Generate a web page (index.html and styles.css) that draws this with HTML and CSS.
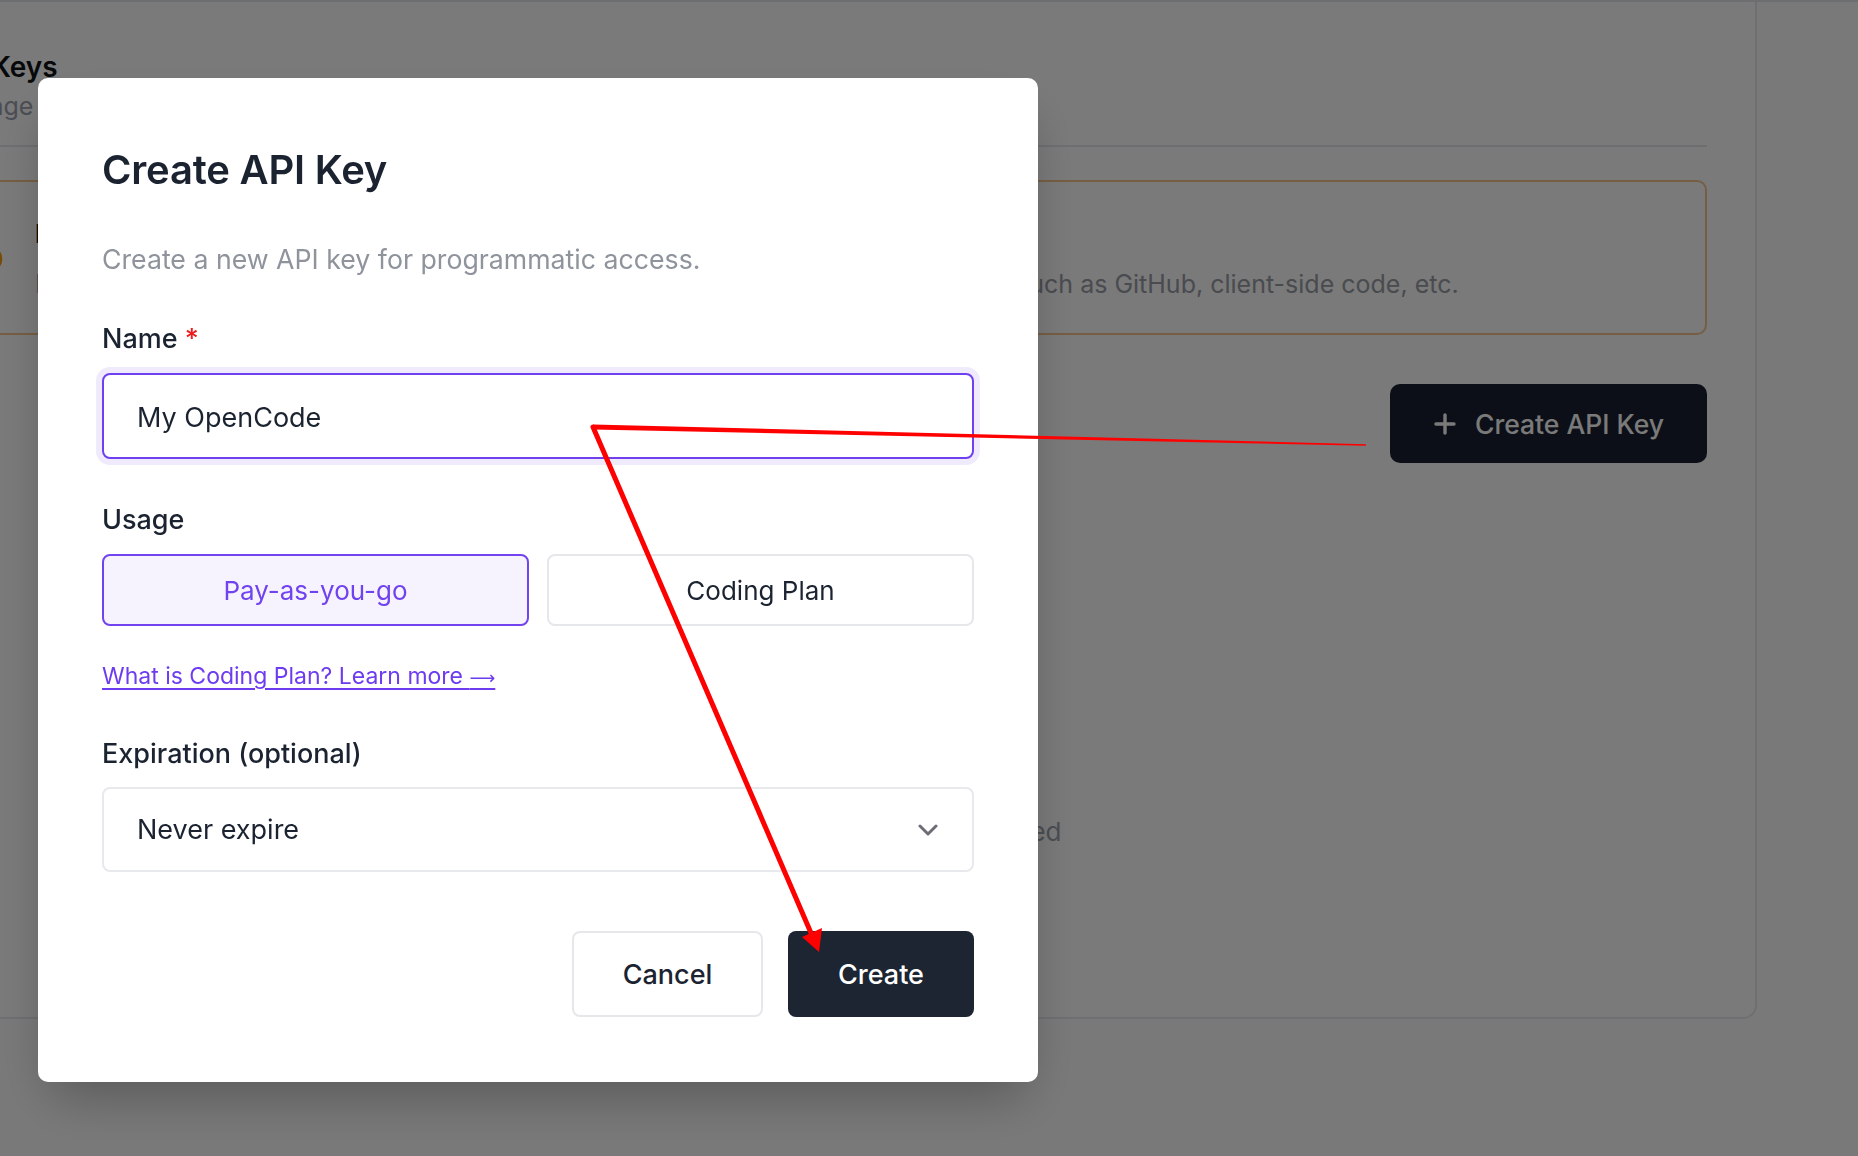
FILE: index.html
```html
<!DOCTYPE html>
<html lang="en">
<head>
<meta charset="utf-8">
<title>Create API Key</title>
<link rel="stylesheet" href="styles.css">
</head>
<body>
<div class="main">
  <section class="card">
    <header class="card-header">
      <h1 class="page-title">API Keys</h1>
      <p class="page-sub">Manage your API keys</p>
    </header>
    <div class="warning">
      <svg class="warn-icon" viewBox="0 0 28 28" width="28" height="28" aria-hidden="true">
        <circle cx="14" cy="14" r="12" fill="none" stroke="#f59e0b" stroke-width="2.6"/>
        <path d="M14 8v7" stroke="#f59e0b" stroke-width="2.6" stroke-linecap="round"/>
        <circle cx="14" cy="19.5" r="1.5" fill="#f59e0b"/>
      </svg>
      <div class="warn-text">
        <p class="warn-title">Keep your API key secure</p>
        <p class="warn-desc">Never share your API key with anyone or expose it in publicly accessible locations, such as GitHub, client-side code, etc.</p>
      </div>
    </div>
    <div class="actions">
      <button class="btn-dark">
        <svg viewBox="0 0 24 24" width="24" height="24" aria-hidden="true"><path d="M12 3v18M3 12h18" stroke="#fff" stroke-width="3.4" stroke-linecap="round"/></svg>
        <span>Create API Key</span>
      </button>
    </div>
    <p class="empty">No API keys have been created</p>
  </section>
</div>

<div class="overlay">
  <div class="modal">
    <h2 class="modal-title">Create API Key</h2>
    <p class="modal-desc">Create a new API key for programmatic access.</p>

    <label class="label first">Name <span class="req">*</span></label>
    <input class="text-input" type="text" value="My OpenCode">

    <div class="label usage">Usage</div>
    <div class="options">
      <button class="option active">Pay-as-you-go</button>
      <button class="option">Coding Plan</button>
    </div>
    <a class="learn" href="#">What is Coding Plan? Learn more <span class="arrow">⟶</span></a>

    <div class="label exp">Expiration (optional)</div>
    <div class="select">
      <span>Never expire</span>
      <svg viewBox="0 0 20 12" width="20" height="12" aria-hidden="true"><path d="M2 2l8 8 8-8" fill="none" stroke="#6b6e74" stroke-width="3" stroke-linecap="round" stroke-linejoin="round"/></svg>
    </div>

    <div class="footer">
      <button class="btn-cancel">Cancel</button>
      <button class="btn-create">Create</button>
    </div>
  </div>
</div>

<svg class="annot" viewBox="0 0 1858 1156" width="1858" height="1156" aria-hidden="true">
  <polygon points="593,424.5 1366,444.2 1366,445.8 593,429.5" fill="#ff0000"/>
  <line x1="593" y1="427" x2="811" y2="933" stroke="#ff0000" stroke-width="5" stroke-linecap="round"/>
  <polygon points="819,952 802,937 822,928" fill="#ff0000"/>
</svg>
</body>
</html>
```

FILE: styles.css
```css
* { box-sizing: border-box; }
html, body { margin: 0; padding: 0; }
body {
  width: 1858px;
  height: 1156px;
  overflow: hidden;
  background: #fdfdfd;
  font-family: Inter, "Noto Sans", "Liberation Sans", sans-serif;
  color: #1b2331;
  position: relative;
}
p, h1, h2 { margin: 0; }
button { font-family: inherit; cursor: pointer; }

/* background page */
.main {
  height: 100%;
  border-top: 2px solid #e4e6ea;
}
.card {
  margin-left: -104px;
  width: 1861px;
  height: 1017px;
  background: #fff;
  border: 2px solid #e6e8eb;
  border-top: none;
  border-radius: 0 0 14px 14px;
  padding: 49px 48px 0;
}
.card-header {
  margin-left: -8px;
  padding-bottom: 23px;
  border-bottom: 2px solid #e5e7eb;
}
.page-title {
  font-size: 28px;
  line-height: 32px;
  font-weight: 600;
  color: #101114;
}
.page-sub {
  margin-top: 7px;
  font-size: 25px;
  line-height: 32px;
  color: #9ca3af;
}
.warning {
  margin-top: 33px;
  border: 2px solid #f5c48c;
  border-radius: 10px;
  padding: 34px 48px 32px 27px;
  display: flex;
  align-items: center;
  gap: 32px;
}
.warn-icon { flex: none; }
.warn-title {
  font-size: 26px;
  line-height: 36px;
  font-weight: 700;
  color: #111318;
}
.warn-desc {
  margin-top: 15px;
  font-size: 25px;
  line-height: 34px;
  color: #989da6;
}
.actions {
  margin-top: 49px;
  display: flex;
  justify-content: flex-end;
}
.btn-dark {
  width: 317px;
  height: 79px;
  border: none;
  border-radius: 10px;
  background: #1b2130;
  color: #fff;
  font-size: 26.5px;
  font-weight: 500;
  display: flex;
  align-items: center;
  justify-content: center;
  gap: 18px;
}
.empty {
  margin-top: 351px;
  padding-left: 86px;
  text-align: center;
  font-size: 26px;
  line-height: 36px;
  color: #9ca3af;
}

/* overlay + modal */
.overlay {
  position: fixed;
  inset: 0;
  background: rgba(0, 0, 0, 0.52);
  padding: 78px 0 0 38px;
}
.modal {
  width: 1000px;
  height: 1004px;
  background: #fff;
  border-radius: 10px;
  padding: 64px 64px 65px;
  box-shadow: 0 25px 50px -12px rgba(0, 0, 0, 0.28);
  display: flex;
  flex-direction: column;
}
.modal-title {
  font-size: 40px;
  line-height: 56px;
  font-weight: 600;
  color: #1b2331;
  letter-spacing: -0.2px;
}
.modal-desc {
  margin-top: 43px;
  font-size: 26.7px;
  line-height: 36px;
  color: #8e939c;
}
.label {
  display: block;
  font-size: 27px;
  line-height: 36px;
  font-weight: 500;
  color: #1b2331;
}
.label.first { margin-top: 44px; }
.label.usage { margin-top: 43px; }
.label.exp { margin-top: 42px; }
.req { color: #ee1d1d; }
.text-input {
  margin-top: 16px;
  height: 88px;
  width: 100%;
  border: 2px solid #6f3ff0;
  border-radius: 8px;
  box-shadow: 0 0 0 6px #efebfd;
  padding: 2px 33px 0;
  font-family: inherit;
  font-size: 27px;
  color: #1b2331;
  outline: none;
  background: #fff;
}
.options {
  margin-top: 16px;
  display: grid;
  grid-template-columns: 1fr 1fr;
  gap: 18px;
}
.option {
  height: 72px;
  border: 2px solid #e6e7ea;
  border-radius: 8px;
  background: #fff;
  font-size: 26px;
  color: #1b2331;
}
.option.active {
  border-color: #7244ef;
  background: #f6f3fe;
  color: #7043ef;
}
.learn {
  align-self: flex-start;
  margin-top: 34px;
  font-size: 23px;
  line-height: 32px;
  color: #6d3cf0;
  text-decoration: underline;
  text-decoration-thickness: 2px;
  text-underline-offset: 4px;
}
.arrow {
  font-family: "DejaVu Sans", sans-serif;
  font-size: 18px;
}
.select {
  margin-top: 15px;
  height: 87px;
  border: 2px solid #e8e9ed;
  border-radius: 8px;
  padding: 0 34px 0 33px;
  display: flex;
  align-items: center;
  justify-content: space-between;
  font-size: 27px;
  color: #1b2331;
}
.footer {
  margin-top: 59px;
  display: flex;
  justify-content: flex-end;
  gap: 25px;
}
.btn-cancel, .btn-create {
  height: 86px;
  border-radius: 8px;
  font-size: 27px;
  font-weight: 500;
}
.btn-cancel {
  width: 191px;
  border: 2px solid #e6e7ea;
  background: #fff;
  color: #1b2331;
}
.btn-create {
  width: 186px;
  border: none;
  background: #1c2531;
  color: #fff;
}

/* red annotation drawn over the screenshot */
.annot {
  position: absolute;
  left: 0;
  top: 0;
  pointer-events: none;
}
```
